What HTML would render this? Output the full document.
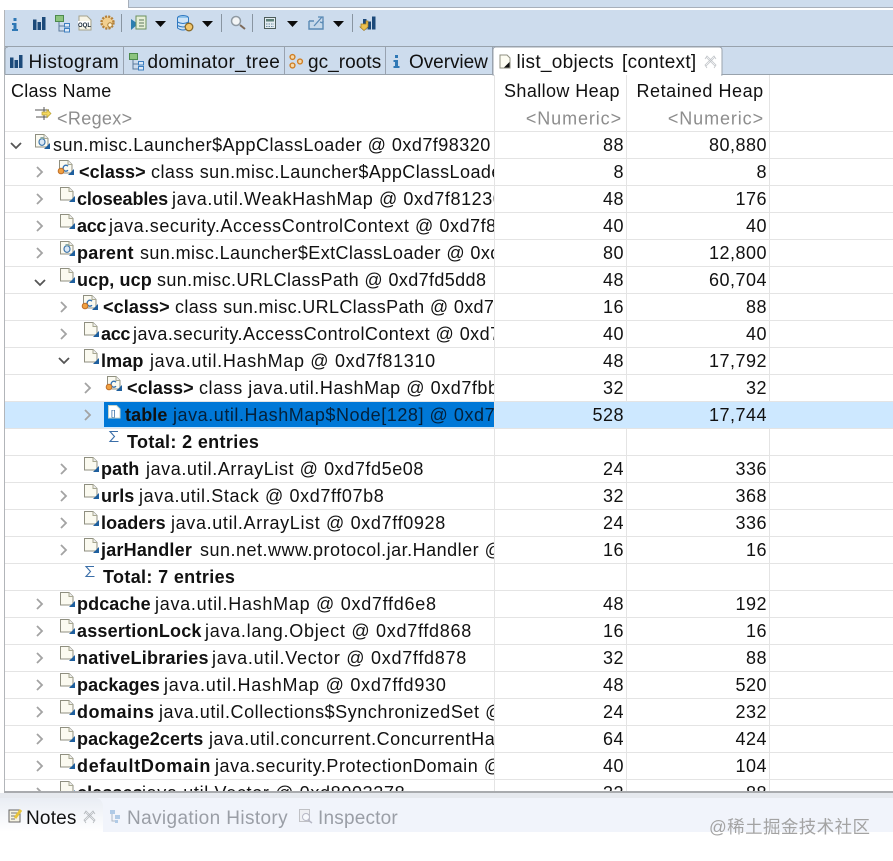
<!DOCTYPE html>
<html><head><meta charset="utf-8">
<style>
html,body{margin:0;padding:0;background:#fff;width:893px;height:861px;overflow:hidden}
svg{display:block}
text{font-family:"Liberation Sans","Noto Sans CJK SC",sans-serif;font-size:18px;fill:#111;letter-spacing:.55px}
.b{font-weight:bold;letter-spacing:.1px}
.n{text-anchor:end;letter-spacing:.5px}
.g{fill:#8d8d8d;letter-spacing:.9px}
.d{fill:#9a9ea6}
</style></head><body>
<svg width="893" height="861" viewBox="0 0 893 861" xmlns="http://www.w3.org/2000/svg">
<defs>
<clipPath id="c"><rect x="0" y="131" width="494" height="661"/></clipPath>
<clipPath id="r"><rect x="0" y="131" width="893" height="661"/></clipPath>
<linearGradient id="ng" x1="0" x2="0" y1="0" y2="1"><stop offset="0" stop-color="#e9edf4"/><stop offset="1" stop-color="#fff"/></linearGradient>
<g id="doc"><path d="M.5.5H9L13 4.500V13H.5Z" fill="#fbfaf0" stroke="#8f8f80"/><path d="M9 .5V4.500H13" fill="#eee" stroke="#a8a890"/><path d="M15 9V15H9Z" fill="#1e5f9e"/></g>
<g id="obj"><use href="#doc"/><ellipse cx="7" cy="8" rx="3" ry="3.400" fill="#dbe8f5" stroke="#3f77ad" stroke-width="1.200"/><rect x="5.500" y="3" width="3" height="2" fill="#8aa"/></g>
<g id="cls"><use href="#doc"/><path d="M9 6.200A2.800 3 0 1 0 9 10.200" fill="none" stroke="#2f6fb0" stroke-width="1.300"/><circle cx="2" cy="11" r="2.800" fill="#f0a040" stroke="#c0702a"/></g>
<path id="ar" d="M0 0L5 5L0 10" fill="none" stroke="#a3a3a3" stroke-width="1.800"/>
<path id="dn" d="M0 0L5 5L10 0" fill="none" stroke="#555" stroke-width="1.800"/>
<path id="tri" d="M0 0H11L5.500 6Z" fill="#0b0b0b"/>
<g id="tree"><rect x=".5" y=".5" width="8" height="6" fill="#8cc47e" stroke="#4c8a4c"/><path d="M4 7V16H9M4 11H9" fill="none" stroke="#5a7a9a"/><rect x="9.500" y="8.500" width="5" height="3.500" fill="#dfeaf7" stroke="#3d7fc0"/><rect x="9.500" y="13.500" width="5" height="3.500" fill="#dfeaf7" stroke="#3d7fc0"/></g>
<g id="bars"><rect x="0" y="2.500" width="3.500" height="10.500" fill="#1c4a7a"/><rect x="4.500" y="5" width="3.500" height="8" fill="#1c4a7a"/><rect x="9" y="0" width="3.500" height="13" fill="#1c4a7a"/></g>
<g id="info"><rect x="1.500" y="0" width="3" height="3" fill="#2f78b5"/><path d="M0 5H4.500V11H6V13H0V11H1.500V7H0Z" fill="#2f78b5"/></g>
<g id="sig"><path d="M9 1.500H1L5.500 6.500L1 11.500H9.500" fill="none" stroke="#3a6ea8" stroke-width="1.100"/></g>
</defs>

<!-- top -->
<rect width="893" height="7" fill="#cddced"/>
<rect width="128" height="7" fill="#fff"/>
<rect x="128" y="7" width="765" height="1" fill="#a7afba"/>
<rect x="128" y="0" width="1" height="7" fill="#a7afba"/>
<!-- toolbar -->
<rect x="4" y="10" width="889" height="37" fill="#cddced"/>
<rect x="4" y="46" width="889" height="1" fill="#98a2ac"/>
<rect x="4" y="47" width="889" height="27" fill="#cddced"/>
<rect x="4" y="74" width="889" height="1" fill="#98a2ac"/>
<rect x="4" y="10" width="1" height="782" fill="#b2b5b9"/>

<use href="#info" x="12" y="18"/>
<use href="#bars" x="33" y="17"/>
<use href="#tree" x="55" y="15"/>
<path d="M79 16H87L91 20V30H79Z" fill="#f7f4e6" stroke="#a5a28c"/><rect x="78" y="21" width="12" height="5" fill="#fff"/>
<text x="78" y="27" style="font-size:6px;font-weight:bold;fill:#123;letter-spacing:0">OQL</text>
<circle cx="107.500" cy="22.500" r="6" fill="#f2cf8e" stroke="#b5813a" stroke-dasharray="2 1.200" stroke-width="2.400"/><circle cx="110" cy="25" r="2.200" fill="#fff5da" stroke="#a87b33"/>
<rect x="121" y="14" width="1" height="18" fill="#8995a1"/>
<path d="M131 19L138 24L131 30Z" fill="#2c7fb0"/><rect x="136" y="16" width="10" height="13" fill="#e6efd8" stroke="#6b8f5d"/><path d="M139 20H144M139 23H144M139 26H144" stroke="#5c7a5c"/>
<use href="#tri" x="155" y="21"/>
<ellipse cx="183" cy="18" rx="5.500" ry="2.500" fill="#8ec3ec" stroke="#2f78c0"/><path d="M177.500 18V28Q183 32 188.500 28V18" fill="#cfe4f6" stroke="#2f78c0"/><path d="M177.500 22Q183 25 188.500 22M177.500 25.500Q183 28.500 188.500 25.500" fill="none" stroke="#2f78c0"/><circle cx="189" cy="27" r="3.800" fill="#f2c66c" stroke="#8a6a28" stroke-width="1.300"/>
<use href="#tri" x="202" y="21"/>
<rect x="221" y="14" width="1" height="18" fill="#8995a1"/>
<circle cx="236" cy="21" r="4.500" fill="#f3f5f6" stroke="#8f9aa3" stroke-width="1.500"/><path d="M240 25L245 29" stroke="#7d6a5a" stroke-width="2"/>
<rect x="252" y="14" width="1" height="18" fill="#8995a1"/>
<rect x="264.500" y="17.500" width="11" height="11" fill="#e4edf2" stroke="#4d5d5a"/><rect x="266" y="19" width="8" height="2.500" fill="#5d7f78"/><path d="M266 24H274M266 26.500H274" stroke="#6a8aa0" stroke-dasharray="1.500 1"/>
<use href="#tri" x="287" y="21"/>
<path d="M309 21V29H323V21M309 21H314M320 22L323 23" fill="#c6d9ea" stroke="#5a8ab5" stroke-width="1.400"/><path d="M314 26L322 17M318 17H323V22" fill="none" stroke="#5a8ab5" stroke-width="1.300"/>
<use href="#tri" x="333" y="21"/>
<rect x="352" y="14" width="1" height="18" fill="#8995a1"/>
<use href="#bars" x="363" y="16.500"/>
<path d="M361 24H366V21H368V27L364 30.500L360 27H361Z" fill="#ecc04e" stroke="#a17a20" stroke-width=".7"/>

<!-- tabs -->
<path d="M5 74V50Q5 47 8 47H123V74Z" fill="#cddced"/>
<path d="M5 74V50Q5 47 8 47" fill="none" stroke="#98a2ac"/>
<g fill="#98a2b0"><rect x="123" y="47" width="1" height="27"/><rect x="284" y="47" width="1" height="27"/><rect x="385" y="47" width="1" height="27"/><rect x="492" y="47" width="1" height="27"/></g>
<use href="#bars" x="10" y="55"/>
<text x="28.500" y="68" style="font-size:19px;letter-spacing:.45px">Histogram</text>
<use href="#tree" x="129" y="53" />
<text x="147.500" y="68" style="font-size:19px;letter-spacing:.35px">dominator_tree</text>
<g fill="#f6d9aa" stroke="#cf7f26" stroke-width="1.400"><circle cx="292.500" cy="57" r="2.400"/><circle cx="292.500" cy="65.500" r="2.400"/><circle cx="300" cy="61.500" r="2.400"/></g>
<text x="308" y="68" style="font-size:19px;letter-spacing:.05px">gc_roots</text>
<use href="#info" x="393.500" y="55"/>
<text x="409" y="68" style="font-size:19px;letter-spacing:-.05px">Overview</text>
<path d="M493 75V50Q493 47 496 47H719Q722 47 722 50V75Z" fill="#fff" stroke="#9aa3ad"/>
<rect x="494" y="74" width="227" height="2" fill="#fff"/>
<path d="M500 55H507L510 58V68H500Z" fill="#fdfcf2" stroke="#8f8f80"/><path d="M509.500 62V67.500H504Z" fill="#111"/>
<text x="516.500" y="68" style="font-size:19px;letter-spacing:.3px">list_objects</text>
<text x="622" y="68" style="font-size:19px;letter-spacing:.3px">[context]</text>
<path d="M706 57L715 66M715 57L706 66M705 59L707 56L716 65L714 68M716 59L714 56L705 65L707 68" fill="none" stroke="#c0c4c8" stroke-width=".8"/>

<!-- header -->
<text x="11" y="97" style="letter-spacing:.25px">Class Name</text>
<text x="504" y="97" style="letter-spacing:.4px">Shallow Heap</text>
<text x="636.500" y="97" style="letter-spacing:.55px">Retained Heap</text>
<path d="M35 110H49M44 107V113M36 117H48M44 114V120" stroke="#555" fill="none"/><path d="M42 112H47V109.500L51 113.500L47 117.500V115H42Z" fill="#f4d860" stroke="#b8a030" stroke-width=".7"/>
<text x="57" y="124.500" class="g" style="letter-spacing:.35px">&lt;Regex&gt;</text>
<text x="622" y="124.500" class="n g" style="letter-spacing:.9px">&lt;Numeric&gt;</text>
<text x="764" y="124.500" class="n g" style="letter-spacing:.9px">&lt;Numeric&gt;</text>

<!-- grid -->
<g fill="#e4e4e4">
<rect x="494" y="75" width="1" height="717"/><rect x="626" y="75" width="1" height="717"/><rect x="769" y="75" width="1" height="717"/>
<rect x="5" y="131" width="888" height="1"/><rect x="5" y="158" width="888" height="1"/><rect x="5" y="185" width="888" height="1"/><rect x="5" y="212" width="888" height="1"/><rect x="5" y="239" width="888" height="1"/><rect x="5" y="266" width="888" height="1"/><rect x="5" y="293" width="888" height="1"/><rect x="5" y="320" width="888" height="1"/><rect x="5" y="347" width="888" height="1"/><rect x="5" y="374" width="888" height="1"/><rect x="5" y="401" width="888" height="1"/><rect x="5" y="428" width="888" height="1"/><rect x="5" y="455" width="888" height="1"/><rect x="5" y="482" width="888" height="1"/><rect x="5" y="509" width="888" height="1"/><rect x="5" y="536" width="888" height="1"/><rect x="5" y="563" width="888" height="1"/><rect x="5" y="590" width="888" height="1"/><rect x="5" y="617" width="888" height="1"/><rect x="5" y="644" width="888" height="1"/><rect x="5" y="671" width="888" height="1"/><rect x="5" y="698" width="888" height="1"/><rect x="5" y="725" width="888" height="1"/><rect x="5" y="752" width="888" height="1"/><rect x="5" y="779" width="888" height="1"/>
</g>
<rect x="5" y="402" width="888" height="26" fill="#cde8ff"/>
<rect x="104" y="402" width="390" height="25" fill="#0078d7"/>
<rect x="494" y="402" width="1" height="26" fill="#e4e4e4"/>

<g clip-path="url(#c)">
<use href="#dn" x="11" y="143"/><use href="#obj" x="35" y="134"/>
<text x="53" y="151" style="letter-spacing:.47px">sun.misc.Launcher$AppClassLoader @ 0xd7f98320</text>

<use href="#ar" x="37" y="167"/><use href="#cls" x="59" y="160"/>
<text x="79" y="178" class="b">&lt;class&gt;</text><text x="151" y="178" style="letter-spacing:.45px">class sun.misc.Launcher$AppClassLoader @ 0xd7f98</text>

<use href="#ar" x="37" y="194"/><use href="#doc" x="60" y="187"/>
<text x="77" y="205" class="b" style="letter-spacing:-.1px">closeables</text><text x="172" y="205" style="letter-spacing:.6px">java.util.WeakHashMap @ 0xd7f81230</text>

<use href="#ar" x="37" y="221"/><use href="#doc" x="60" y="214"/>
<text x="77" y="232" class="b" style="letter-spacing:-.3px">acc</text><text x="109" y="232">java.security.AccessControlContext @ 0xd7f8123</text>

<use href="#ar" x="37" y="248"/><use href="#obj" x="60" y="241"/>
<text x="77" y="259" class="b" style="letter-spacing:.3px">parent</text><text x="140" y="259" style="letter-spacing:.4px">sun.misc.Launcher$ExtClassLoader @ 0xd7f8</text>

<use href="#dn" x="35" y="280"/><use href="#doc" x="60" y="268"/>
<text x="77" y="286" class="b">ucp, ucp</text><text x="157" y="286" style="letter-spacing:.38px">sun.misc.URLClassPath @ 0xd7fd5dd8</text>

<use href="#ar" x="61" y="302"/><use href="#cls" x="83" y="295"/>
<text x="103" y="313" class="b">&lt;class&gt;</text><text x="175" y="313" style="letter-spacing:.35px">class sun.misc.URLClassPath @ 0xd7fa8</text>

<use href="#ar" x="61" y="329"/><use href="#doc" x="84" y="322"/>
<text x="101" y="340" class="b" style="letter-spacing:-.3px">acc</text><text x="133" y="340" style="letter-spacing:.45px">java.security.AccessControlContext @ 0xd7f8</text>

<use href="#dn" x="59" y="358"/><use href="#doc" x="84" y="349"/>
<text x="101" y="367" class="b">lmap</text><text x="150" y="367" style="letter-spacing:.68px">java.util.HashMap @ 0xd7f81310</text>

<use href="#ar" x="85" y="383"/><use href="#cls" x="107" y="376"/>
<text x="127" y="394" class="b">&lt;class&gt;</text><text x="199" y="394">class java.util.HashMap @ 0xd7fbb8</text>

<use href="#ar" x="85" y="410"/>
<path d="M108.500 405.500H116.500L120 409V418H108.500Z" fill="#fff" stroke="#c8d4c8"/><text x="111" y="416" style="font-size:8px;fill:#1f5f9e;letter-spacing:0">[]</text>
<text x="125" y="421" class="b">table</text><text x="173" y="421" style="fill:#04203a">java.util.HashMap$Node[128] @ 0xd7f813</text>

<use href="#sig" x="109" y="430"/>
<text x="127" y="448" class="b" style="letter-spacing:.35px">Total: 2 entries</text>

<use href="#ar" x="61" y="464"/><use href="#doc" x="84" y="457"/>
<text x="101" y="475" class="b">path</text><text x="146" y="475" style="letter-spacing:.58px">java.util.ArrayList @ 0xd7fd5e08</text>

<use href="#ar" x="61" y="491"/><use href="#doc" x="84" y="484"/>
<text x="101" y="502" class="b">urls</text><text x="139" y="502" style="letter-spacing:.62px">java.util.Stack @ 0xd7ff07b8</text>

<use href="#ar" x="61" y="518"/><use href="#doc" x="84" y="511"/>
<text x="101" y="529" class="b">loaders</text><text x="171" y="529" style="letter-spacing:.65px">java.util.ArrayList @ 0xd7ff0928</text>

<use href="#ar" x="61" y="545"/><use href="#doc" x="84" y="538"/>
<text x="101" y="556" class="b" style="letter-spacing:.2px">jarHandler</text><text x="200" y="556" style="letter-spacing:.5px">sun.net.www.protocol.jar.Handler @ 0xd7</text>

<use href="#sig" x="85" y="565"/>
<text x="103" y="583" class="b" style="letter-spacing:.35px">Total: 7 entries</text>

<use href="#ar" x="37" y="599"/><use href="#doc" x="60" y="592"/>
<text x="77" y="610" class="b">pdcache</text><text x="155" y="610" style="letter-spacing:.72px">java.util.HashMap @ 0xd7ffd6e8</text>

<use href="#ar" x="37" y="626"/><use href="#doc" x="60" y="619"/>
<text x="77" y="637" class="b" style="letter-spacing:.2px">assertionLock</text><text x="205" y="637" style="letter-spacing:.72px">java.lang.Object @ 0xd7ffd868</text>

<use href="#ar" x="37" y="653"/><use href="#doc" x="60" y="646"/>
<text x="77" y="664" class="b" style="letter-spacing:.25px">nativeLibraries</text><text x="212" y="664" style="letter-spacing:.72px">java.util.Vector @ 0xd7ffd878</text>

<use href="#ar" x="37" y="680"/><use href="#doc" x="60" y="673"/>
<text x="77" y="691" class="b">packages</text><text x="164" y="691" style="letter-spacing:.75px">java.util.HashMap @ 0xd7ffd930</text>

<use href="#ar" x="37" y="707"/><use href="#doc" x="60" y="700"/>
<text x="77" y="718" class="b" style="letter-spacing:.5px">domains</text><text x="159" y="718">java.util.Collections$SynchronizedSet @ 0xd7</text>

<use href="#ar" x="37" y="734"/><use href="#doc" x="60" y="727"/>
<text x="77" y="745" class="b">package2certs</text><text x="209" y="745">java.util.concurrent.ConcurrentHashMap</text>

<use href="#ar" x="37" y="761"/><use href="#doc" x="60" y="754"/>
<text x="77" y="772" class="b" style="letter-spacing:.7px">defaultDomain</text><text x="215" y="772">java.security.ProtectionDomain @ 0xd7</text>

<use href="#ar" x="37" y="788"/><use href="#doc" x="60" y="781"/>
<text x="77" y="799" class="b">classes</text><text x="142" y="799" style="letter-spacing:.65px">java.util.Vector @ 0xd8003278</text>
</g>

<g clip-path="url(#r)">
<text class="n" x="624" y="151">88</text><text class="n" x="767" y="151">80,880</text>
<text class="n" x="624" y="178">8</text><text class="n" x="767" y="178">8</text>
<text class="n" x="624" y="205">48</text><text class="n" x="767" y="205">176</text>
<text class="n" x="624" y="232">40</text><text class="n" x="767" y="232">40</text>
<text class="n" x="624" y="259">80</text><text class="n" x="767" y="259">12,800</text>
<text class="n" x="624" y="286">48</text><text class="n" x="767" y="286">60,704</text>
<text class="n" x="624" y="313">16</text><text class="n" x="767" y="313">88</text>
<text class="n" x="624" y="340">40</text><text class="n" x="767" y="340">40</text>
<text class="n" x="624" y="367">48</text><text class="n" x="767" y="367">17,792</text>
<text class="n" x="624" y="394">32</text><text class="n" x="767" y="394">32</text>
<text class="n" x="624" y="421">528</text><text class="n" x="767" y="421">17,744</text>
<text class="n" x="624" y="475">24</text><text class="n" x="767" y="475">336</text>
<text class="n" x="624" y="502">32</text><text class="n" x="767" y="502">368</text>
<text class="n" x="624" y="529">24</text><text class="n" x="767" y="529">336</text>
<text class="n" x="624" y="556">16</text><text class="n" x="767" y="556">16</text>
<text class="n" x="624" y="610">48</text><text class="n" x="767" y="610">192</text>
<text class="n" x="624" y="637">16</text><text class="n" x="767" y="637">16</text>
<text class="n" x="624" y="664">32</text><text class="n" x="767" y="664">88</text>
<text class="n" x="624" y="691">48</text><text class="n" x="767" y="691">520</text>
<text class="n" x="624" y="718">24</text><text class="n" x="767" y="718">232</text>
<text class="n" x="624" y="745">64</text><text class="n" x="767" y="745">424</text>
<text class="n" x="624" y="772">40</text><text class="n" x="767" y="772">104</text>
<text class="n" x="624" y="799">32</text><text class="n" x="767" y="799">88</text>
</g>

<!-- bottom -->
<rect x="4" y="791" width="889" height="2" fill="#a9abae"/>
<rect y="793" width="893" height="5" fill="#e6e9ee"/>
<rect y="798" width="893" height="34" fill="#f1f4fb"/>
<path d="M0 798H95Q102 798 103 806V832H0Z" fill="url(#ng)"/>
<rect y="832" width="893" height="29" fill="#fff"/>
<rect x="9" y="810" width="11" height="12" fill="#f6f3e2" stroke="#666"/><path d="M11 813H18M11 816H16M11 819H15" stroke="#777"/><path d="M15 818L21 810" stroke="#e8c43a" stroke-width="3"/>
<text x="26" y="824" style="font-size:19px;letter-spacing:.2px">Notes</text>
<path d="M85 812L94 821M94 812L85 821M84 814L86 811L95 820L93 823M95 814L93 811L84 820L86 823" fill="none" stroke="#b4b8bc" stroke-width=".8"/>
<g opacity=".55"><rect x="110" y="810" width="5" height="4" fill="#7ba9d6"/><rect x="115" y="815" width="5" height="4" fill="#7ba9d6"/><rect x="115" y="820" width="3" height="3" fill="#7ba9d6"/><path d="M112 814V821H115" stroke="#789" fill="none"/></g>
<text x="127" y="824" class="d" style="font-size:19px;letter-spacing:.38px">Navigation History</text>
<g opacity=".55"><rect x="299.500" y="809.500" width="10" height="12" fill="#eee" stroke="#999"/><circle cx="306" cy="817" r="3.500" fill="#fff" stroke="#889"/><path d="M308 820L312 823" stroke="#889" stroke-width="1.500"/></g>
<text x="318" y="824" class="d" style="font-size:19px;letter-spacing:.2px">Inspector</text>

<text x="709" y="833" style="font-size:17.500px;fill:#a3a3a3;letter-spacing:.4px">@稀土掘金技术社区</text>
</svg>
</body></html>
